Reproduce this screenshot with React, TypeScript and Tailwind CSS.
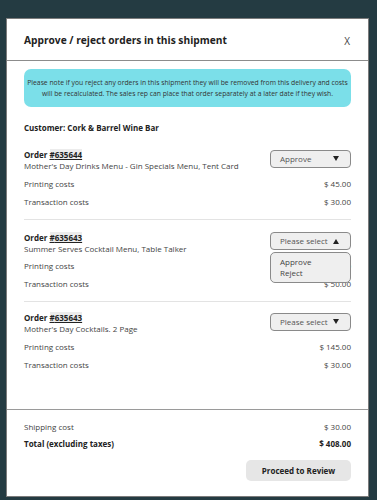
import React from "react";

const font = { fontFamily: '"Open Sans", "Noto Sans", sans-serif' };

function Tri({ up }: { up?: boolean }) {
  return (
    <svg width="6" height="5" viewBox="0 0 6 5" className="shrink-0">
      {up ? <polygon points="3,0 6,5 0,5" fill="#222" /> : <polygon points="0,0 6,0 3,5" fill="#222" />}
    </svg>
  );
}

function Select({ label, up }: { label: string; up?: boolean }) {
  return (
    <div className="w-[81px] h-[18px] mt-[0.5px] rounded-[4px] border border-[#8a8a8a] bg-[#efefef] flex items-center justify-between pl-[9px] pr-[11px] text-[8px] text-[#555]">
      <span>{label}</span>
      <Tri up={up} />
    </div>
  );
}

function Row({ label, value }: { label: string; value: string }) {
  return (
    <div className="h-[18px] flex items-center justify-between text-[8px] text-[#444]">
      <span>{label}</span>
      <span>{value}</span>
    </div>
  );
}

function Order({
  num,
  desc,
  select,
  up,
  printing,
  transaction,
  divider,
  menu,
  pt,
}: {
  num: string;
  desc: string;
  select: string;
  up?: boolean;
  printing: string;
  transaction: string;
  divider?: boolean;
  menu?: boolean;
  pt: string;
}) {
  return (
    <div className={`relative ${pt} pb-[8px] ${divider ? "border-b border-[#e3e3e3]" : ""}`}>
      <div className="flex justify-between">
        <div className="leading-[11px]">
          <div className="text-[8px] font-bold text-[#222]">
            Order <span className="bg-[#ececec] underline">#{num}</span>
          </div>
          <div className="text-[8px] text-[#444]">{desc}</div>
        </div>
        <Select label={select} up={up} />
      </div>
      <div className="mt-[3.5px]">
        <Row label="Printing costs" value={printing} />
        <Row label="Transaction costs" value={transaction} />
      </div>
      {menu && (
        <div className="absolute right-0 top-[32px] w-[81px] h-[31px] rounded-[5px] border border-[#8a8a8a] bg-[#efefef] pl-[9px] pt-[3px] text-[8px] text-[#444] leading-[11px]">
          <div>Approve</div>
          <div>Reject</div>
        </div>
      )}
    </div>
  );
}

export default function App() {
  return (
    <div style={font} className="w-[377px] h-[500px] bg-[#243b42] pt-[18px] pl-[6px] overflow-hidden">
      <div className="w-[363px] h-[479px] bg-white border border-[#7b7b7b] flex flex-col">
        <div className="h-[42px] shrink-0 border-b border-[#8c8c8c] flex items-center justify-between pl-[17px] pr-[18px] pt-[3px]">
          <span className="text-[10.2px] font-bold text-[#222]">Approve / reject orders in this shipment</span>
          <span className="text-[10px] text-[#444]">X</span>
        </div>
        <div className="flex-1 px-[17px] pt-[8px]">
          <div className="h-[38px] rounded-[7px] bg-[#7bdfe9] flex flex-col items-center justify-center text-center text-[6.8px] leading-[11px] text-[#333]">
            <div>Please note if you reject any orders in this shipment they will be removed from this delivery and costs</div>
            <div>will be recalculated. The sales rep can place that order separately at a later date if they wish.</div>
          </div>
          <div className="mt-[15px] leading-[11px] text-[8px] font-bold text-[#222]">Customer: Cork &amp; Barrel Wine Bar</div>
          <Order
            pt="pt-[16px]"
            num="635644"
            desc="Mother's Day Drinks Menu - Gin Specials Menu, Tent Card"
            select="Approve"
            printing="$ 45.00"
            transaction="$ 30.00"
            divider
          />
          <Order
            pt="pt-[12px]"
            num="635643"
            desc="Summer Serves Cocktail Menu, Table Talker"
            select="Please select"
            up
            printing="$ 50.00"
            transaction="$ 50.00"
            divider
            menu
          />
          <Order
            pt="pt-[10px]"
            num="635643"
            desc="Mother's Day Cocktails. 2 Page"
            select="Please select"
            printing="$ 145.00"
            transaction="$ 30.00"
          />
        </div>
        <div className="shrink-0 border-t border-[#9a9a9a] px-[17px] pt-[8px] pb-[15px]">
          <div className="h-[17px] flex items-center justify-between text-[8px] text-[#444]">
            <span>Shipping cost</span>
            <span>$ 30.00</span>
          </div>
          <div className="h-[17px] flex items-center justify-between text-[8px] font-bold text-[#222]">
            <span>Total (excluding taxes)</span>
            <span>$ 408.00</span>
          </div>
          <div className="flex justify-end mt-[8px]">
            <div className="w-[105px] h-[21px] rounded-[5px] bg-[#e6e6e6] flex items-center justify-center text-[8px] font-bold text-[#222]">
              Proceed to Review
            </div>
          </div>
        </div>
      </div>
    </div>
  );
}
